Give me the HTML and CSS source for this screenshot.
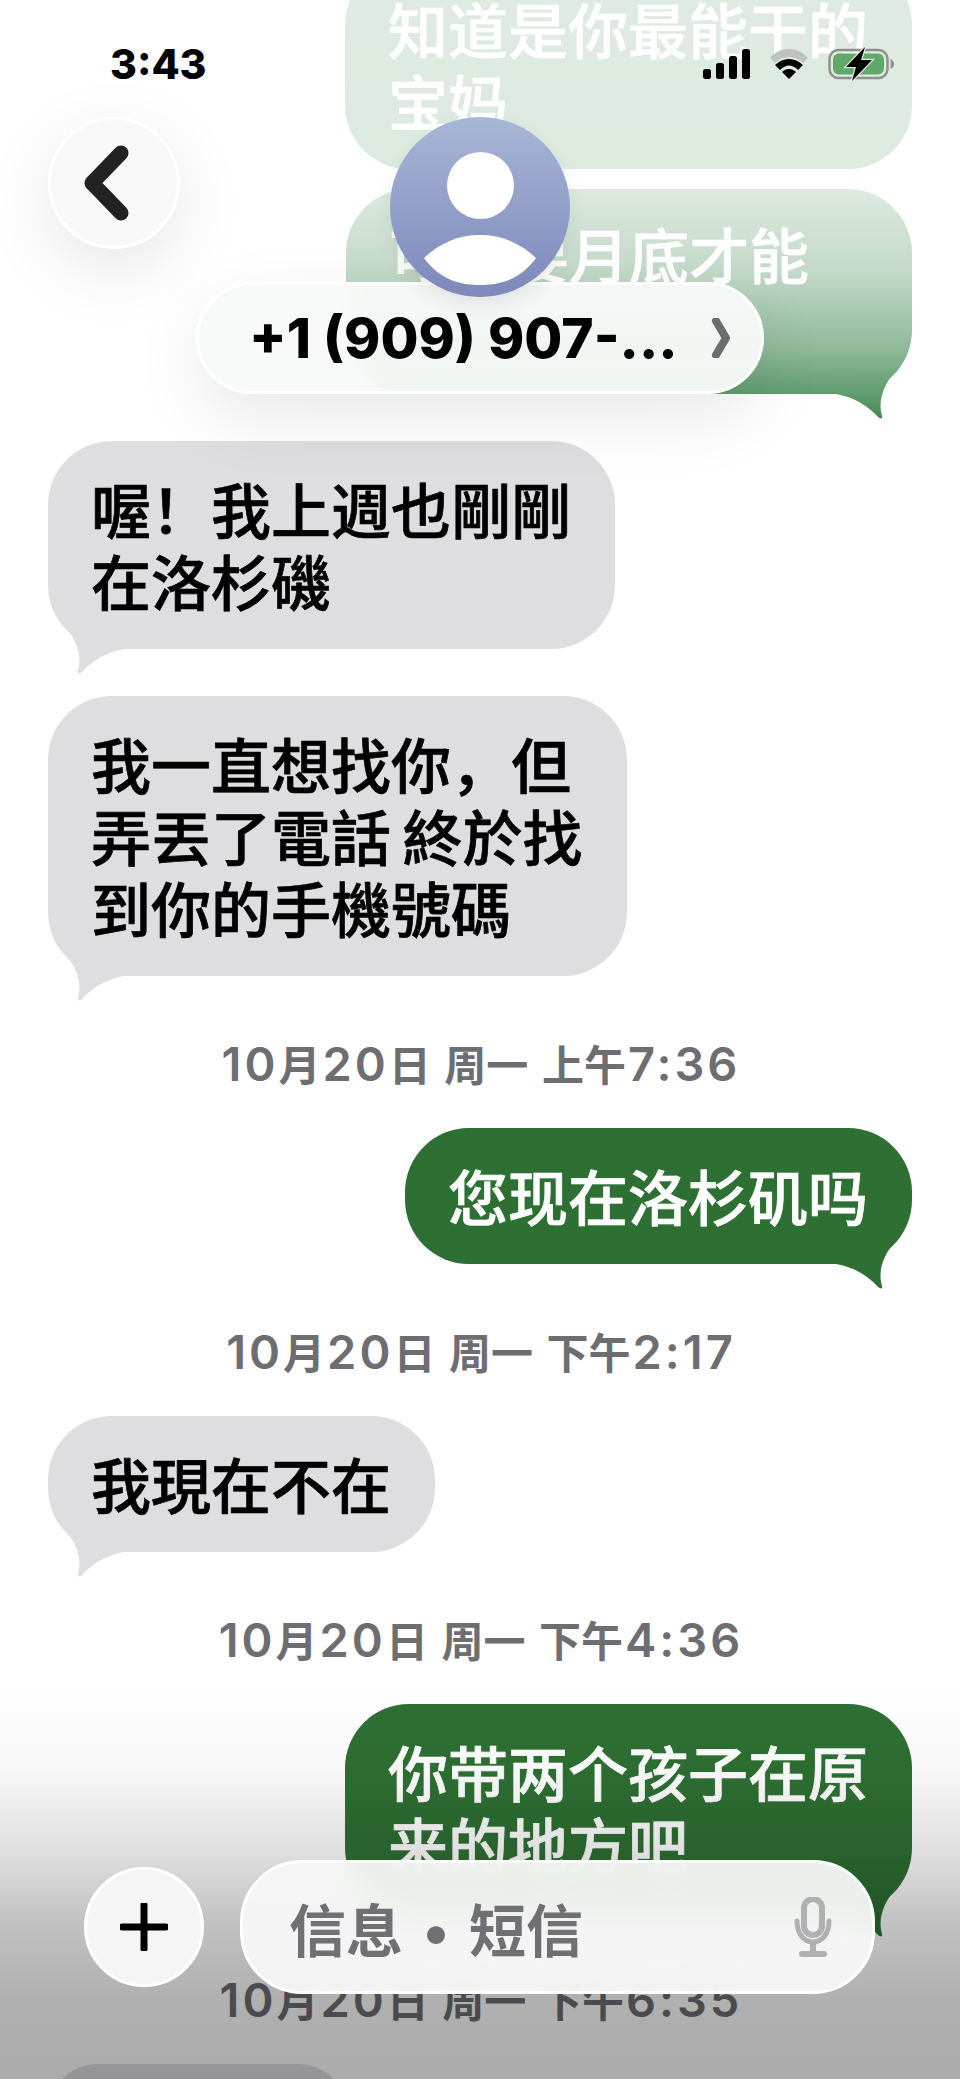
FILE: index.html
```html
<!DOCTYPE html>
<html lang="zh">
<head>
    <meta charset="UTF-8">
    <meta name="viewport" content="width=device-width, initial-scale=1.0">
    <title>信息</title>
    <link rel="stylesheet" href="styles.css">
</head>
<body>
    <div id="screen">
        <div id="chat">
            <div class="bubble out first">知道是你最能干的<br>宝妈</div>
            <div class="bubble out second">可能要月底才能<br>&nbsp;
                <svg class="tail" viewBox="0 0 80 50"><path d="M4 25C22 28 36 37 46 48C48 50 51 50 50 47C46 34 50 18 62 4L4 0Z"/></svg>
            </div>
            <div class="bubble in gap-top">喔！我上週也剛剛<br>在洛杉磯
                <svg class="tail" viewBox="0 0 80 50"><path d="M4 25C22 28 36 37 46 48C48 50 51 50 50 47C46 34 50 18 62 4L4 0Z"/></svg>
            </div>
            <div class="bubble in gap-top narrow-space">我一直想找你，但<br>弄丟了電話 終於找<br>到你的手機號碼
                <svg class="tail" viewBox="0 0 80 50"><path d="M4 25C22 28 36 37 46 48C48 50 51 50 50 47C46 34 50 18 62 4L4 0Z"/></svg>
            </div>
            <div class="stamp"><span class="num">10</span>月<span class="num">20</span>日 周一 上午<span class="num">7:36</span></div>
            <div class="bubble out">您现在洛杉矶吗
                <svg class="tail" viewBox="0 0 80 50"><path d="M4 25C22 28 36 37 46 48C48 50 51 50 50 47C46 34 50 18 62 4L4 0Z"/></svg>
            </div>
            <div class="stamp"><span class="num">10</span>月<span class="num">20</span>日 周一 下午<span class="num">2:17</span></div>
            <div class="bubble in">我現在不在
                <svg class="tail" viewBox="0 0 80 50"><path d="M4 25C22 28 36 37 46 48C48 50 51 50 50 47C46 34 50 18 62 4L4 0Z"/></svg>
            </div>
            <div class="stamp"><span class="num">10</span>月<span class="num">20</span>日 周一 下午<span class="num">4:36</span></div>
            <div class="bubble out">你带两个孩子在原<br>来的地方吧
                <svg class="tail" viewBox="0 0 80 50"><path d="M4 25C22 28 36 37 46 48C48 50 51 50 50 47C46 34 50 18 62 4L4 0Z"/></svg>
            </div>
            <div class="stamp"><span class="num">10</span>月<span class="num">20</span>日 周一 下午<span class="num">6:35</span></div>
            <div class="bubble in peek"></div>
        </div>

        <div id="fade-top"></div>
        <div id="fade-bottom"></div>

        <header id="topbar">
            <div class="status">
                <span class="time">3:43</span>
                <div class="status-icons">
                    <svg class="signal" viewBox="0 0 47 30"><rect x="0" y="20" width="8" height="10" rx="2.500"/><rect x="13" y="14" width="8" height="16" rx="2.500"/><rect x="26" y="7" width="8" height="23" rx="2.500"/><rect x="39" y="0" width="8" height="30" rx="2.500"/></svg>
                    <svg class="wifi" viewBox="0 0 38 30">
                        <path d="M0 9C10 -3 28 -3 38 9L33 14C25 6 13 6 5 14Z" fill="#bfc2bf"/>
                        <path d="M5 16C13 8 25 8 33 16L28 21C22 15 16 15 10 21Z"/>
                        <path d="M12 23C16 19 22 19 26 23L19 30Z"/>
                    </svg>
                    <svg class="battery" viewBox="0 0 68 34">
                        <rect x="1.500" y="3" width="58" height="28" rx="9" fill="none" stroke="#8f8f8f" stroke-width="2.500"/>
                        <rect x="5" y="6.500" width="51" height="21" rx="6" fill="#5fa868"/>
                        <path d="M62.500 12V22C65 21 66 19 66 17S65 13 62.500 12Z" fill="#8f8f8f"/>
                        <path class="bolt" d="M37 0L18 20H28L24 34L44 13H33Z"/>
                    </svg>
                </div>
            </div>
            <button class="back" type="button">
                <svg viewBox="0 0 48 76"><path d="M38 8L9 38L38 68" fill="none" stroke="#222" stroke-width="15" stroke-linecap="round" stroke-linejoin="round"/></svg>
            </button>
            <button class="name-pill" type="button">
                <span>+1 (909) 907-...</span>
                <svg viewBox="0 0 20 40"><path d="M5 3L15 20L5 37" fill="none" stroke="#6c6c70" stroke-width="8" stroke-linecap="round" stroke-linejoin="round"/></svg>
            </button>
            <div class="avatar">
                <span class="avatar-head"></span>
                <svg class="avatar-body" viewBox="0 0 116 50"><path d="M2 23C18 8 36 0 58 0S98 8 114 23C100 42 82 50 58 50S16 42 2 23Z"/></svg>
            </div>
        </header>

        <footer id="composer">
            <button class="plus" type="button">
                <svg viewBox="0 0 48 48"><path d="M24 2V46M2 24H46" fill="none" stroke="#000" stroke-width="7" stroke-linecap="round"/></svg>
            </button>
            <div class="input">
                <span>信息 • 短信</span>
                <svg viewBox="0 0 40 60"><rect x="11" y="2" width="18" height="36" rx="9" fill="none" stroke="#b0b0b3" stroke-width="6"/><path d="M4 24C4 52 36 52 36 24" fill="none" stroke="#b0b0b3" stroke-width="5" stroke-linecap="round"/><path d="M20 46V54M9 57H31" fill="none" stroke="#b0b0b3" stroke-width="6" stroke-linecap="round"/></svg>
            </div>
        </footer>
    </div>
</body>
</html>
```
FILE: styles.css
```css
html, body {
    margin: 0;
    padding: 0;
    background-color: #ffffff;
}
#screen {
    position: relative;
    width: 960px;
    height: 2079px;
    overflow: hidden;
    font-family: Inter, "Noto Sans CJK SC", sans-serif;
}
#chat {
    display: flex;
    flex-direction: column;
    padding: 0 48px;
}
.bubble {
    position: relative;
    box-sizing: border-box;
    width: fit-content;
    padding: 31px 44px 33px 43px;
    border-radius: 64px;
    font-family: "Noto Sans CJK SC", sans-serif;
    font-size: 60px;
    font-weight: 500;
    -webkit-text-stroke: 0.7px currentColor;
    line-height: 72px;
    white-space: nowrap;
}
.bubble.in {
    background-color: #dedee1;
    color: #000000;
}
.bubble.out {
    align-self: flex-end;
    background-color: #2e7033;
    color: #ffffff;
}
.bubble.first,
.bubble.second {
    background-color: #2a7a3d;
}
.first {
    margin-top: -39px;
}
.second {
    width: 566px;
    margin-top: 20px;
    padding-top: 28px;
}
.gap-top {
    margin-top: 47px;
}
.narrow-space {
    word-spacing: -2px;
}
.peek {
    width: 300px;
    height: 100px;
}
.tail {
    position: absolute;
    right: 0;
    bottom: -25px;
    width: 80px;
    height: 50px;
    fill: #2e7033;
}
.second .tail {
    fill: #2a7a3d;
}
.bubble.in .tail {
    right: auto;
    left: 0;
    fill: #dedee1;
    transform: scaleX(-1);
}
.stamp {
    margin: 66px 0 40px;
    font-size: 42px;
    font-weight: 600;
    line-height: 44px;
    word-spacing: 3px;
    color: #6d6d72;
    text-align: center;
}
.num {
    margin-left: 2px;
    font-size: 47px;
    letter-spacing: 3px;
}
#fade-top {
    position: absolute;
    top: 0;
    left: 0;
    right: 0;
    height: 450px;
    background: linear-gradient(to bottom, rgba(255, 255, 255, 0.85) 0, rgba(255, 255, 255, 0.84) 190px, rgba(255, 255, 255, 0.72) 270px, rgba(255, 255, 255, 0.47) 350px, rgba(255, 255, 255, 0.25) 395px, rgba(255, 255, 255, 0) 445px);
}
#fade-bottom {
    position: absolute;
    left: 0;
    right: 0;
    bottom: 0;
    height: 400px;
    background: linear-gradient(to bottom, rgba(0, 0, 0, 0) 0, rgba(0, 0, 0, 0.03) 90px, rgba(0, 0, 0, 0.12) 170px, rgba(0, 0, 0, 0.24) 240px, rgba(0, 0, 0, 0.31) 320px, rgba(0, 0, 0, 0.33) 100%);
}
#topbar {
    position: absolute;
    top: 0;
    left: 0;
    right: 0;
}
.status {
    display: flex;
    align-items: center;
    justify-content: space-between;
    padding: 47px 64px 0 110px;
}
.time {
    font-size: 41px;
    font-weight: 800;
    line-height: 34px;
    color: #000000;
}
.status-icons {
    display: flex;
    align-items: center;
    gap: 20px;
}
.signal {
    width: 47px;
    height: 30px;
}
.wifi {
    width: 38px;
    height: 30px;
}
.battery {
    width: 68px;
    height: 34px;
}
.bolt {
    fill: #000000;
    stroke: #dcebe0;
    stroke-width: 2.500px;
    paint-order: stroke;
}
.back {
    position: absolute;
    top: 117px;
    left: 48px;
    display: flex;
    align-items: center;
    justify-content: center;
    box-sizing: border-box;
    width: 132px;
    height: 132px;
    padding: 0 14px 0 0;
    border: 3px solid #ffffff;
    border-radius: 50%;
    background-color: #f8f8f8;
    box-shadow: 0 20px 70px rgba(0, 0, 0, 0.1);
}
.back svg {
    width: 48px;
    height: 76px;
}
.avatar {
    position: absolute;
    top: 117px;
    left: 390px;
    width: 180px;
    height: 180px;
    border-radius: 50%;
    overflow: hidden;
    background: linear-gradient(to bottom, #a7b6d6, #7d88bb);
    box-shadow: 0 8px 20px rgba(0, 0, 0, 0.08);
}
.avatar-head {
    position: absolute;
    top: 35px;
    left: 57px;
    width: 67px;
    height: 67px;
    border-radius: 50%;
    background-color: #ffffff;
}
.avatar-body {
    position: absolute;
    top: 118px;
    left: 32px;
    width: 116px;
    height: 50px;
    fill: #ffffff;
}
.name-pill {
    position: absolute;
    top: 282px;
    left: 196px;
    display: flex;
    align-items: center;
    justify-content: space-between;
    box-sizing: border-box;
    width: 568px;
    height: 112px;
    padding: 0 30px 0 50px;
    border: 3px solid #ffffff;
    border-radius: 56px;
    background-color: rgba(248, 250, 249, 0.94);
    backdrop-filter: blur(14px);
    box-shadow: 0 24px 70px rgba(0, 0, 0, 0.09);
    font-family: Inter, sans-serif;
    font-size: 55px;
    font-weight: 800;
    white-space: nowrap;
    color: #000000;
}
.name-pill svg {
    width: 20px;
    height: 40px;
}
#composer {
    position: absolute;
    top: 1860px;
    left: 84px;
    display: flex;
    align-items: center;
    gap: 36px;
}
.plus {
    display: flex;
    align-items: center;
    justify-content: center;
    box-sizing: border-box;
    width: 120px;
    height: 120px;
    padding: 0;
    border: 3px solid #ffffff;
    border-radius: 50%;
    background-color: #f5f5f5;
}
.plus svg {
    width: 48px;
    height: 48px;
}
.input {
    display: flex;
    align-items: center;
    justify-content: space-between;
    box-sizing: border-box;
    width: 635px;
    height: 134px;
    padding: 0 39px 0 46px;
    border: 3px solid #ffffff;
    border-radius: 62px;
    background-color: rgba(246, 247, 246, 0.95);
    backdrop-filter: blur(14px);
    font-family: Inter, "Noto Sans CJK SC", sans-serif;
    font-size: 57px;
    font-weight: 700;
    word-spacing: 6px;
    color: #6f6f74;
}
.input svg {
    width: 40px;
    height: 60px;
}
```
